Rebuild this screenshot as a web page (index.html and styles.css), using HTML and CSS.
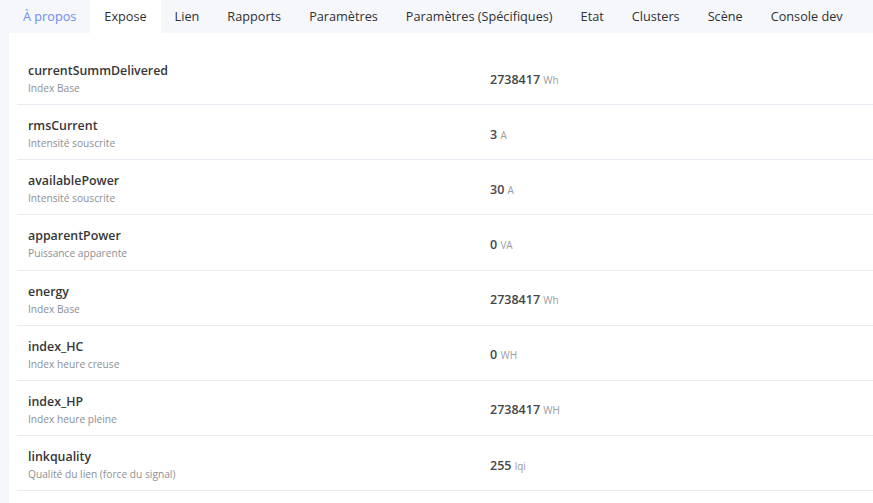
FILE: index.html
```html
<!DOCTYPE html>
<html lang="fr">
<head>
    <meta charset="UTF-8">
    <meta name="viewport" content="width=device-width, initial-scale=1.0">
    <title>Expose</title>
    <link rel="stylesheet" href="styles.css">
</head>
<body>
    <div class="tabs">
        <a href="#" class="tab link">À propos</a>
        <a href="#" class="tab active">Expose</a>
        <a href="#" class="tab">Lien</a>
        <a href="#" class="tab">Rapports</a>
        <a href="#" class="tab">Paramètres</a>
        <a href="#" class="tab">Paramètres (Spécifiques)</a>
        <a href="#" class="tab">Etat</a>
        <a href="#" class="tab">Clusters</a>
        <a href="#" class="tab">Scène</a>
        <a href="#" class="tab">Console dev</a>
    </div>

    <div class="panel">
        <div class="row">
            <div class="label">
                <div class="name">currentSummDelivered</div>
                <div class="desc">Index Base</div>
            </div>
            <div class="value">2738417 <span class="unit">Wh</span></div>
        </div>
        <div class="row">
            <div class="label">
                <div class="name">rmsCurrent</div>
                <div class="desc">Intensité souscrite</div>
            </div>
            <div class="value">3 <span class="unit">A</span></div>
        </div>
        <div class="row">
            <div class="label">
                <div class="name">availablePower</div>
                <div class="desc">Intensité souscrite</div>
            </div>
            <div class="value">30 <span class="unit">A</span></div>
        </div>
        <div class="row">
            <div class="label">
                <div class="name">apparentPower</div>
                <div class="desc">Puissance apparente</div>
            </div>
            <div class="value">0 <span class="unit">VA</span></div>
        </div>
        <div class="row">
            <div class="label">
                <div class="name">energy</div>
                <div class="desc">Index Base</div>
            </div>
            <div class="value">2738417 <span class="unit">Wh</span></div>
        </div>
        <div class="row">
            <div class="label">
                <div class="name">index_HC</div>
                <div class="desc">Index heure creuse</div>
            </div>
            <div class="value">0 <span class="unit">WH</span></div>
        </div>
        <div class="row">
            <div class="label">
                <div class="name">index_HP</div>
                <div class="desc">Index heure pleine</div>
            </div>
            <div class="value">2738417 <span class="unit">WH</span></div>
        </div>
        <div class="row">
            <div class="label">
                <div class="name">linkquality</div>
                <div class="desc">Qualité du lien (force du signal)</div>
            </div>
            <div class="value">255 <span class="unit">lqi</span></div>
        </div>
    </div>
</body>
</html>
```

FILE: styles.css
```css
* {
    margin: 0;
    padding: 0;
    box-sizing: border-box;
}

body {
    font-family: 'Open Sans', 'Noto Sans', sans-serif;
    background: #f5f7fb;
    color: #303133;
    padding-left: 9px;
    overflow: hidden;
}

.tabs {
    display: flex;
    height: 33px;
}

.tab {
    display: flex;
    align-items: center;
    padding: 0 14px 2px;
    font-size: 12.7px;
    color: #303133;
    text-decoration: none;
    white-space: nowrap;
}

.tab.link {
    color: #6c8cf2;
}

.tab.active {
    background: #ffffff;
}

.panel {
    background: #ffffff;
    padding: 17px 0 0 8px;
    min-height: 470px;
}

.row {
    display: grid;
    grid-template-columns: 462px 1fr;
    align-items: center;
    height: 55.15px;
    padding: 4px 0 0 11px;
    border-bottom: 1px solid #e8ecf2;
}

.name {
    font-size: 12.4px;
    font-weight: 600;
    color: #36373a;
    line-height: 19px;
}

.desc {
    font-size: 10.2px;
    color: #8c8f96;
    line-height: 17px;
}

.value {
    font-size: 12.5px;
    font-weight: 600;
    color: #454649;
}

.unit {
    font-size: 10px;
    font-weight: 400;
    color: #9a9da4;
}
```
